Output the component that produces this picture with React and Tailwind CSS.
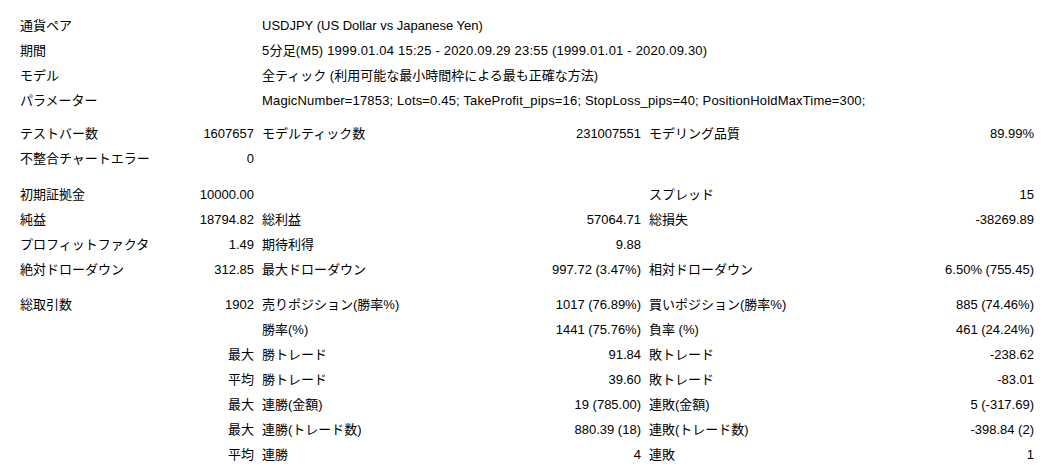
const font = { fontFamily: '"Liberation Sans", "Noto Sans CJK JP", sans-serif' };

const header = [
  ['通貨ペア', 'USDJPY (US Dollar vs Japanese Yen)', ''],
  ['期間', '5分足(M5) 1999.01.04 15:25 - 2020.09.29 23:55 (1999.01.01 - 2020.09.30)', 'tracking-[0.2px]'],
  ['モデル', '全ティック (利用可能な最小時間枠による最も正確な方法)', ''],
  ['パラメーター', 'MagicNumber=17853; Lots=0.45; TakeProfit_pips=16; StopLoss_pips=40; PositionHoldMaxTime=300;', 'tracking-[0.17px]'],
];

const group1 = [
  ['テストバー数', '1607657', 'モデルティック数', '231007551', 'モデリング品質', '89.99%'],
  ['不整合チャートエラー', '0', '', '', '', ''],
];

const group2 = [
  ['初期証拠金', '10000.00', '', '', 'スプレッド', '15'],
  ['純益', '18794.82', '総利益', '57064.71', '総損失', '-38269.89'],
  ['プロフィットファクタ', '1.49', '期待利得', '9.88', '', ''],
  ['絶対ドローダウン', '312.85', '最大ドローダウン', '997.72 (3.47%)', '相対ドローダウン', '6.50% (755.45)'],
];

const group3 = [
  ['総取引数', '1902', '売りポジション(勝率%)', '1017 (76.89%)', '買いポジション(勝率%)', '885 (74.46%)'],
  ['', '', '勝率(%)', '1441 (75.76%)', '負率 (%)', '461 (24.24%)'],
  ['', '最大', '勝トレード', '91.84', '敗トレード', '-238.62'],
  ['', '平均', '勝トレード', '39.60', '敗トレード', '-83.01'],
  ['', '最大', '連勝(金額)', '19 (785.00)', '連敗(金額)', '5 (-317.69)'],
  ['', '最大', '連勝(トレード数)', '880.39 (18)', '連敗(トレード数)', '-398.84 (2)'],
  ['', '平均', '連勝', '4', '連敗', '1'],
];

const Row = ({ cells }) => (
  <div className="flex h-[25px] items-center whitespace-nowrap">
    <div className="w-[150px] pl-[20px]">{cells[0]}</div>
    <div className="w-[104px] text-right">{cells[1]}</div>
    <div className="w-[286px] pl-[8px]">{cells[2]}</div>
    <div className="w-[101px] text-right">{cells[3]}</div>
    <div className="w-[259px] pl-[8px]">{cells[4]}</div>
    <div className="w-[134px] text-right">{cells[5]}</div>
  </div>
);

const App = () => {
  return (
    <div className="w-[1051px] h-[468px] overflow-hidden bg-white text-black text-[13px] leading-none pt-[13px]" style={font}>
      {header.map(([label, value, extra], i) => (
        <div key={i} className="flex h-[25px] items-center whitespace-nowrap">
          <div className="w-[254px] pl-[20px]">{label}</div>
          <div className={`pl-[8px] ${extra}`}>{value}</div>
        </div>
      ))}
      <div className="h-[7.5px]" />
      {group1.map((r, i) => <Row key={i} cells={r} />)}
      <div className="h-[11px]" />
      {group2.map((r, i) => <Row key={i} cells={r} />)}
      <div className="h-[10px]" />
      {group3.map((r, i) => <Row key={i} cells={r} />)}
    </div>
  );
};

export default App;
